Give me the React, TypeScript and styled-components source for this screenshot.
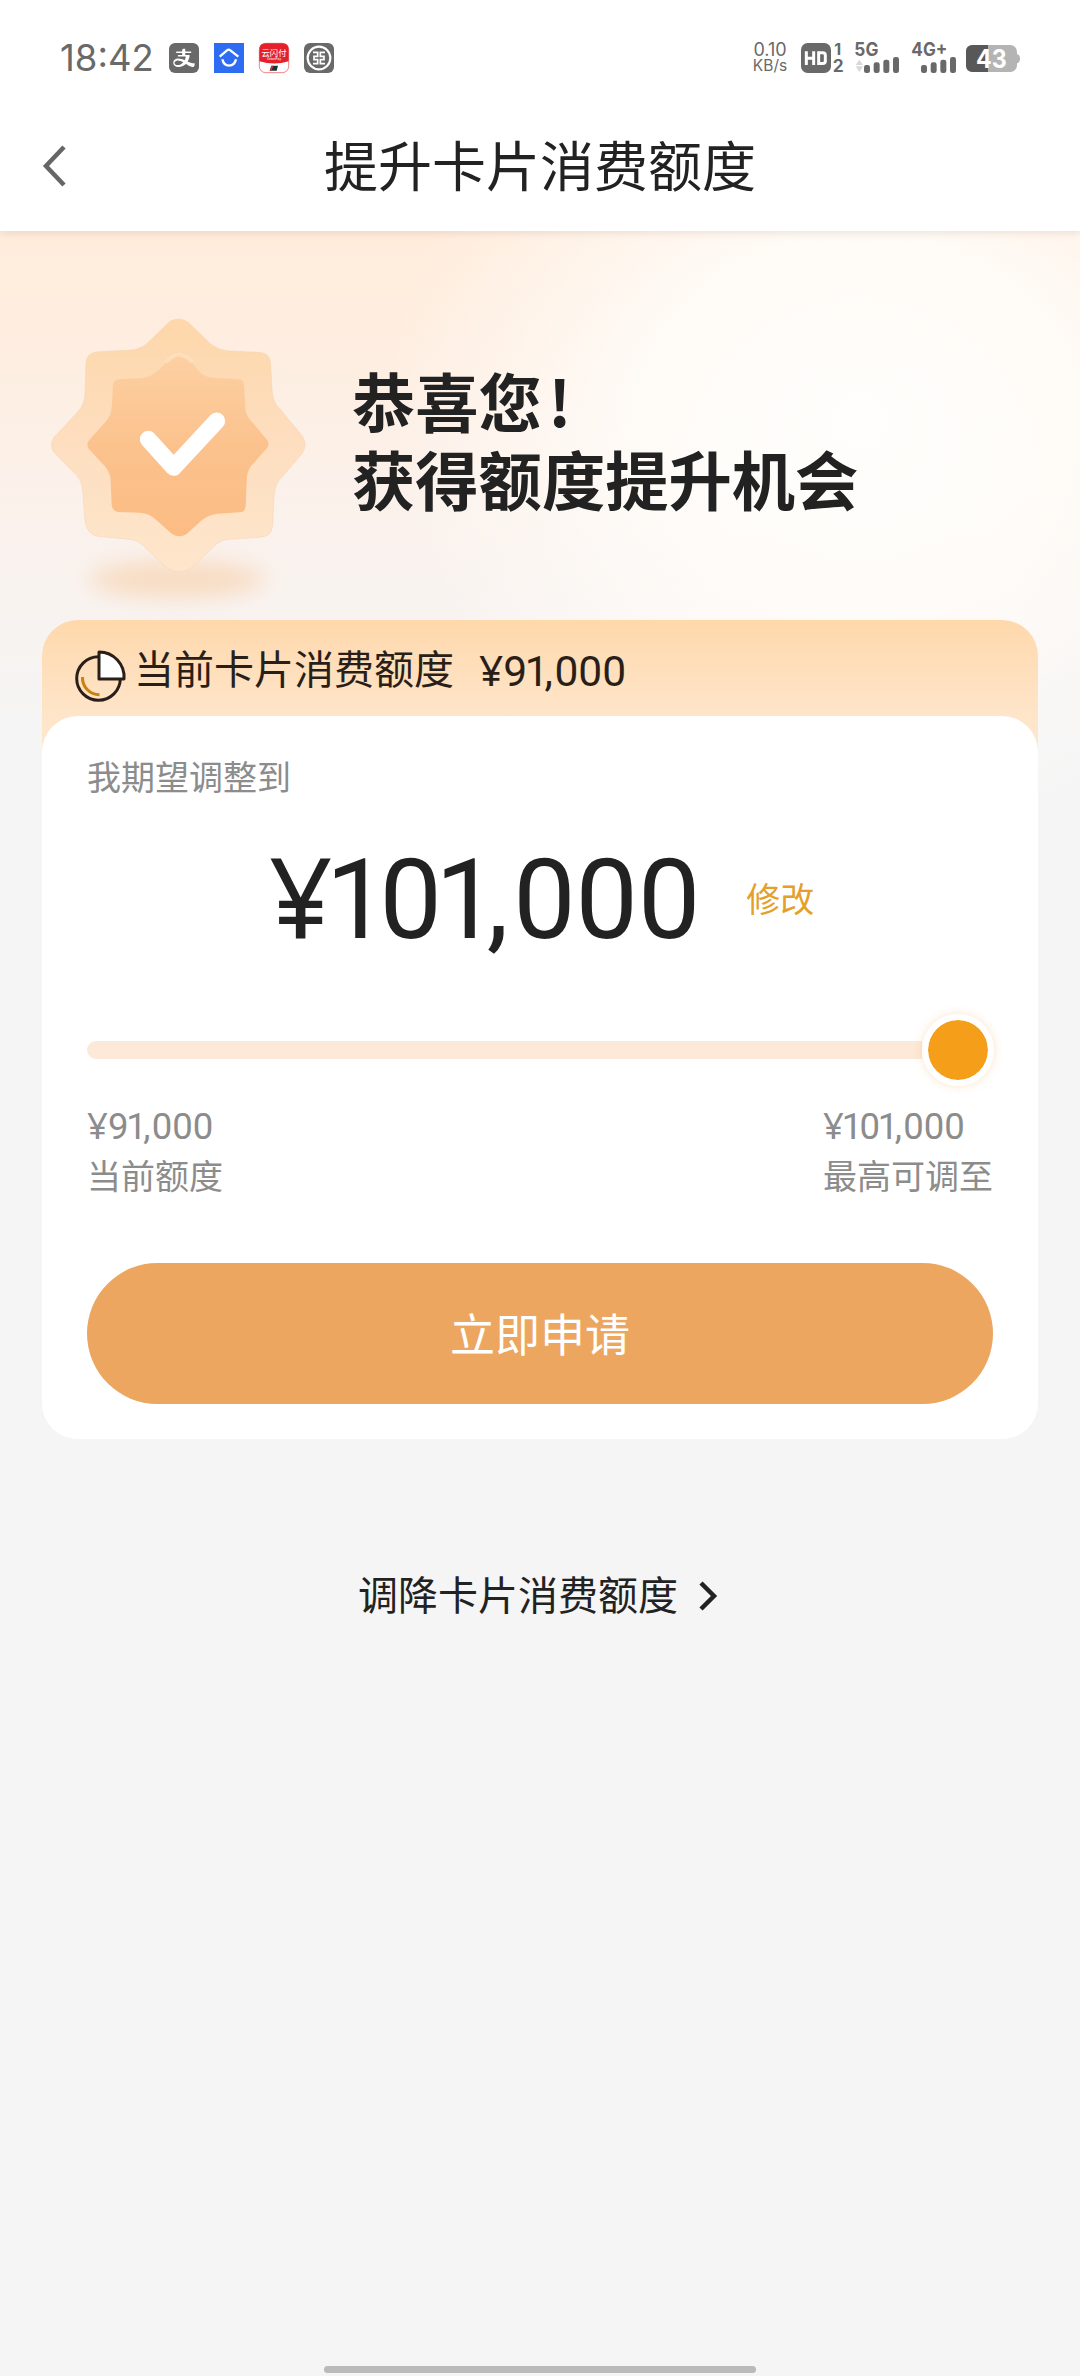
import React from 'react';
import styled, { createGlobalStyle } from 'styled-components';
import { AiFillAlipaySquare } from 'react-icons/ai';

const Global = createGlobalStyle`
  * { box-sizing: border-box; }
  body { margin: 0; background: #f5f5f5; }
  button { border: 0; padding: 0; background: none; font: inherit; color: inherit; }
  svg { overflow: visible; flex: none; }
`;

const Page = styled.div`
  width: 1080px;
  height: 2376px;
  display: flex;
  flex-direction: column;
  overflow: hidden;
  background: #f5f5f5;
  color: #222;
  font-family: Roboto, 'Noto Sans CJK SC', sans-serif;
`;

const TopArea = styled.div`
  background: #fff;
  position: relative;
  height: 231px;
  flex: none;
  box-shadow: 0 2px 8px rgba(90, 60, 40, 0.12);
`;

const StatusBar = styled.div`
  height: 116px;
  padding: 0 60px 0 60px;
  display: flex;
  align-items: center;
  justify-content: space-between;
  color: #696969;
`;

const StatusLeft = styled.div`
  display: flex;
  align-items: center;
  gap: 15px;
`;

const Clock = styled.span`
  width: 94px;
  font: 400 36.5px/40px Inter, sans-serif;
  white-space: nowrap;
`;

const AlipayBadge = styled(AiFillAlipaySquare)`
  border-radius: 6px;
  overflow: hidden;
`;

const StatusRight = styled.div`
  display: flex;
  align-items: center;
`;

const Speed = styled.div`
  width: 36px;
  margin-right: 13px;
  display: flex;
  flex-direction: column;
  align-items: center;
  font: 400 18px/16px Inter, sans-serif;
  white-space: nowrap;
  small { font-size: 15.5px; }
`;

const NavBar = styled.div`
  height: 100px;
  padding: 0 43px;
  display: grid;
  grid-template-columns: 24px 1fr 24px;
  align-items: center;
`;

const BackButton = styled.button`
  display: flex;
`;

const Title = styled.h1`
  margin: 6px 0 0;
  text-align: center;
  font-weight: 400;
  font-size: 54px;
  line-height: 80px;
`;

const Main = styled.main`
  flex: 1;
  display: flex;
  flex-direction: column;
  background:
    radial-gradient(ellipse 480px 420px at 860px 190px, rgba(255, 254, 252, 1) 0%, rgba(255, 253, 250, 0.85) 45%, rgba(255, 250, 247, 0) 100%) no-repeat 0 0 / 1080px 560px,
    linear-gradient(180deg, #ffecdb 0, #feeee1 130px, #fbf1eb 270px, #f9f2ee 340px, #f5f5f5 510px);
`;

const Hero = styled.section`
  height: 389px;
  display: flex;
  padding: 59px 30px 0;
`;

const HeroText = styled.h2`
  margin: 71px 0 0 22px;
  font-size: 63.3px;
  line-height: 78px;
  font-weight: 700;
  font-family: 'Noto Sans CJK SC', sans-serif;
  white-space: nowrap;
`;

const Bang = styled.span`
  margin-left: 6px;
`;

const Card = styled.section`
  margin: 0 42px;
  border-radius: 36px;
  background: linear-gradient(180deg, #ffd8ac 0, #fee6cb 100px, #ffe8d0 140px, #fff 141px);
`;

const CurrentLimit = styled.div`
  height: 96px;
  padding: 6px 0 0 33px;
  display: flex;
  align-items: center;
  font-size: 40px;
  color: #2a1f18;
  > svg { margin-top: 9px; }
`;

const CurrentLabel = styled.span`
  margin: 0 25px 0 8px;
  line-height: 50px;
`;

const Panel = styled.div`
  height: 723px;
  padding: 0 45px;
  border-radius: 36px;
  background: #fff;
  display: flex;
  flex-direction: column;
`;

const Hint = styled.div`
  margin-top: 37px;
  font-size: 34px;
  line-height: 50px;
  color: #8c8c8c;
`;

const AmountRow = styled.div`
  height: 124px;
  margin-top: 35px;
  padding-left: 182px;
  display: flex;
  align-items: center;
`;

const Figure = styled.span<{ $size: number }>`
  font-family: Roboto, sans-serif;
  font-size: ${(p) => p.$size}px;
  font-kerning: none;
  white-space: nowrap;
`;

const Glyph = styled.span<{ $gap: number; $yen: boolean }>`
  font-family: ${(p) => (p.$yen ? "'Noto Sans'" : 'Roboto')}, sans-serif;
  letter-spacing: ${(p) => p.$gap}em;
  line-height: 1;
`;

const EditLink = styled.button`
  margin-left: 46px;
  font-size: 34px;
  line-height: 50px;
  color: #e5a02a;
`;

const Slider = styled.div`
  height: 72px;
  margin-top: 52px;
  display: flex;
  align-items: center;
`;

const Track = styled.div`
  flex: 1;
  height: 18px;
  border-radius: 9px 0 0 9px;
  background: #fde9d7;
`;

const Thumb = styled.div`
  width: 72px;
  height: 72px;
  margin-right: -1px;
  border-radius: 50%;
  border: 6px solid #fff;
  background: #f59e19;
  background-clip: padding-box;
  box-shadow: 0 0 10px rgba(245, 158, 60, 0.28);
`;

const Limits = styled.div`
  display: flex;
  justify-content: space-between;
  margin-top: 16px;
  color: #8c8c8c;
`;

const Limit = styled.div`
  display: flex;
  flex-direction: column;
  font-size: 34px;
  line-height: 50px;
`;

const ApplyButton = styled.button`
  margin-top: 61px;
  height: 141px;
  padding-bottom: 3px;
  border-radius: 71px;
  background: #eca65f;
  color: #fff;
  font-size: 45px;
`;

const LowerLink = styled.button`
  align-self: center;
  margin-top: 129px;
  margin-left: -4px;
  display: flex;
  align-items: center;
  gap: 20px;
  font-size: 40px;
  line-height: 52px;
`;

const LowerLabel = styled.span`
  padding-top: 3px;
`;

const HomeBar = styled.div`
  width: 432px;
  height: 7px;
  margin: auto auto 3px;
  border-radius: 4px;
  background: #bababa;
`;

/* Spacing in em around the glyphs that should sit tighter than tabular digits. */
const LEAD: Record<string, number> = { '1': -0.06, ',': -0.02 };
const TRAIL: Record<string, number> = { '1': -0.078, ',': 0.04 };

function Money({ value, size }: { value: string; size: number }) {
  return (
    <Figure $size={size}>
      {value.split('').map((c, i) => (
        <Glyph key={i} $yen={c === '¥'} $gap={(TRAIL[c] ?? 0) + (LEAD[value[i + 1]] ?? 0)}>
          {c}
        </Glyph>
      ))}
    </Figure>
  );
}

function HouseIcon() {
  return (
    <svg width="30" height="30" viewBox="0 0 90 90">
      <rect width="90" height="90" fill="#2e6cf2" />
      <path d="M17 41 L39 22 Q44 18 49 22 L73 41" fill="none" stroke="#fff" strokeWidth="7" />
      <path d="M25 49 Q29 68 45 68 Q62 68 66 49" fill="none" stroke="#fff" strokeWidth="7" />
    </svg>
  );
}

function QuickPassIcon() {
  return (
    <svg width="30" height="30" viewBox="0 0 90 90">
      <rect x="1" y="1" width="88" height="88" rx="19" fill="#fff" stroke="#dd4a4e" strokeWidth="2" />
      <path d="M1 20 Q1 1 20 1 H70 Q89 1 89 20 V55 Q45 68 1 55 Z" fill="#e6202a" />
      <text x="45" y="38" fontSize="25" fill="#fff" textAnchor="middle" fontFamily="Noto Sans CJK SC">云闪付</text>
      <text x="45" y="52" fontSize="10" fill="#fff" textAnchor="middle" fontFamily="Roboto">UnionPay</text>
      <path d="M37 68 H57 L53 83 H32 Z" fill="#17333c" />
      <path d="M37 68 H43 L38 83 H32 Z" fill="#c33" />
    </svg>
  );
}

function BankIcon() {
  return (
    <svg width="30" height="30" viewBox="0 0 90 90">
      <rect width="90" height="90" rx="18" fill="#696969" />
      <circle cx="45" cy="45" r="34" fill="none" stroke="#fff" strokeWidth="6.5" />
      <g fill="none" stroke="#fff" strokeWidth="5">
        <path d="M27 28 H41 V40 H30 V50 H41 V62 H27" />
        <path d="M63 28 H49 V40 H60 V50 H49 V62 H63" />
      </g>
    </svg>
  );
}

function HdIcon() {
  return (
    <svg width="43" height="30" viewBox="0 0 129 90" fontFamily="Inter" fontWeight="700">
      <rect width="90" height="90" rx="20" fill="#696969" />
      <path d="M16 25 V66 M38 25 V66 M16 46 H38" fill="none" stroke="#fff" strokeWidth="9" />
      <path d="M53 29.5 H65 Q73 29.5 73 37 V54 Q73 61.500 65 61.500 H53 Z" fill="none" stroke="#fff" strokeWidth="9" />
      <text x="100" y="35" fontSize="48" fill="#696969">1</text>
      <text x="95" y="88" fontSize="52" fill="#696969">2</text>
    </svg>
  );
}

function SignalIcon({ label, labelWidth, x, arrows, width }: { label: string; labelWidth: number; x: number; arrows?: boolean; width: number }) {
  return (
    <svg width={width} height="30" viewBox={`0 0 ${width * 3} 90`}>
      <text x="-2" y="40" fontFamily="Inter" fontWeight="700" fontSize="55" textLength={labelWidth} lengthAdjust="spacingAndGlyphs" fill="#696969">{label}</text>
      {arrows && <path d="M2 66 L13 50 L24 66 Z M2 70 H24 L13 87 Z" fill="#d8d8d8" />}
      {[0, 1, 2, 3].map((i) => (
        <rect key={i} x={x + i * 29} y={66 - i * 8} width="18" height={24 + i * 8} rx="7" fill="#696969" />
      ))}
    </svg>
  );
}

function BatteryIcon() {
  return (
    <svg width="54" height="27" viewBox="0 0 162 81">
      <rect width="153" height="81" rx="20" fill="#b4b4b4" />
      <path d="M152 27 Q162 29 162 41 Q162 53 152 55 Z" fill="#b4b4b4" />
      <path d="M20 0 H66 V81 H20 Q0 81 0 61 V20 Q0 0 20 0 Z" fill="#585858" />
      <text x="30" y="69" fontSize="75" fontFamily="Inter" fontWeight="700" fill="#fff" textLength="92" lengthAdjust="spacingAndGlyphs">43</text>
    </svg>
  );
}

function BadgeArt() {
  return (
    <svg width="300" height="330" viewBox="0 0 900 990">
      <defs>
        <linearGradient id="outer" x1="0" y1="0" x2="0" y2="1">
          <stop offset="0" stopColor="#fed7aa" />
          <stop offset="0.5" stopColor="#fddec0" />
          <stop offset="1" stopColor="#fee6cc" />
        </linearGradient>
        <linearGradient id="inner" x1="0" y1="0" x2="0" y2="1">
          <stop offset="0" stopColor="#fdd0a2" />
          <stop offset="0.5" stopColor="#fbc28d" />
          <stop offset="1" stopColor="#fcbc84" />
        </linearGradient>
        <filter id="soft" x="-40%" y="-120%" width="180%" height="340%">
          <feGaussianBlur stdDeviation="32" />
        </filter>
      </defs>
      <ellipse cx="440" cy="868" rx="262" ry="56" fill="#f8d3b0" opacity="0.7" filter="url(#soft)" />
      <path
        d="M418 95 Q445 78 475 97 L538 158 Q562 180 600 183 L688 187 Q722 190 722 224 L727 310 Q730 340 752 359 L817 438 Q833 464 817 490 L748 570 Q734 588 732 620 L728 706 Q724 742 688 742 L598 748 Q570 750 550 771 L484 833 Q449 858 412 835 L340 767 Q322 749 290 747 L204 739 Q170 732 165 692 L158 600 Q156 575 140 556 L72 487 Q56 466 72 442 L143 366 Q163 345 165 312 L168 216 Q172 187 204 185 L305 180 Q338 176 358 154 Z"
        fill="url(#outer)" stroke="#f3d0ac" strokeOpacity="0.45" strokeWidth="3"
      />
      <path
        d="M418 208 Q446 184 478 208 L510 247 Q524 262 552 264 L628 268 Q641 270 642 286 L646 354 Q648 380 668 398 L711 449 Q720 462 711 474 L663 528 Q650 545 650 575 L647 648 Q645 667 629 667 L562 671 Q535 675 515 691 L470 732 Q448 746 426 732 L378 689 Q358 670 330 668 L264 666 Q247 662 245 646 L242 575 Q242 550 226 530 L176 476 Q168 464 176 452 L226 396 Q244 378 245 350 L249 284 Q250 270 268 268 L335 265 Q368 260 388 237 Z"
        fill="url(#inner)"
      />
      <path d="M412 213 Q446 176 484 213" fill="none" stroke="#ffe0bf" strokeWidth="12" strokeLinecap="round" opacity="0.8" />
      <path d="M355 448 L431 532 L560 393" fill="none" stroke="#fff" strokeWidth="51" strokeLinecap="round" strokeLinejoin="round" />
    </svg>
  );
}

function PieIcon() {
  return (
    <svg width="51" height="52" viewBox="0 0 51 52">
      <circle cx="23.500" cy="28.500" r="21.800" fill="none" stroke="#2a1f18" strokeWidth="3" />
      <path d="M24 2 A25 25 0 0 1 49 29 L24 29 Z" fill="#ffdbb3" />
      <path d="M24 2 A25 25 0 0 1 49 29 L24 29 Z" fill="#fff" stroke="#2a1f18" strokeWidth="3" strokeLinejoin="round" />
      <path d="M7.500 27 A17 17 0 0 0 24.500 44.800" fill="none" stroke="#c58412" strokeWidth="3" />
    </svg>
  );
}

export default function App() {
  return (
    <Page>
      <Global />
      <TopArea>
        <StatusBar>
          <StatusLeft>
            <Clock>18:42</Clock>
            <AlipayBadge size={30} viewBox="112 112 800 800" />
            <HouseIcon />
            <QuickPassIcon />
            <BankIcon />
          </StatusLeft>
          <StatusRight>
            <Speed>
              <span>0.10</span>
              <small>KB/s</small>
            </Speed>
            <HdIcon />
            <svg width="11" height="30" />
            <SignalIcon label="5G" labelWidth={72} x={27} arrows width={57} />
            <SignalIcon label="4G+" labelWidth={108} x={27} width={54} />
            <BatteryIcon />
          </StatusRight>
        </StatusBar>
        <NavBar>
          <BackButton aria-label="返回">
            <svg width="24" height="42" viewBox="0 0 24 42">
              <path d="M21 2 L3 21 L21 40" fill="none" stroke="#666" strokeWidth="4.500" />
            </svg>
          </BackButton>
          <Title>提升卡片消费额度</Title>
        </NavBar>
      </TopArea>
      <Main>
        <Hero>
          <BadgeArt />
          <HeroText>
            恭喜您<Bang>!</Bang>
            <br />
            获得额度提升机会
          </HeroText>
        </Hero>
        <Card>
          <CurrentLimit>
            <PieIcon />
            <CurrentLabel>当前卡片消费额度</CurrentLabel>
            <Money value="¥91,000" size={42.5} />
          </CurrentLimit>
          <Panel>
            <Hint>我期望调整到</Hint>
            <AmountRow>
              <Money value="¥101,000" size={111} />
              <EditLink>修改</EditLink>
            </AmountRow>
            <Slider>
              <Track />
              <Thumb />
            </Slider>
            <Limits>
              <Limit>
                <Money value="¥91,000" size={36.5} />
                <span>当前额度</span>
              </Limit>
              <Limit>
                <Money value="¥101,000" size={36.5} />
                <span>最高可调至</span>
              </Limit>
            </Limits>
            <ApplyButton>立即申请</ApplyButton>
          </Panel>
        </Card>
        <LowerLink>
          <LowerLabel>调降卡片消费额度</LowerLabel>
          <svg width="20" height="32" viewBox="0 0 20 32">
            <path d="M3 3 L16 16 L3 29" fill="none" stroke="#222" strokeWidth="4.500" />
          </svg>
        </LowerLink>
        <HomeBar />
      </Main>
    </Page>
  );
}
